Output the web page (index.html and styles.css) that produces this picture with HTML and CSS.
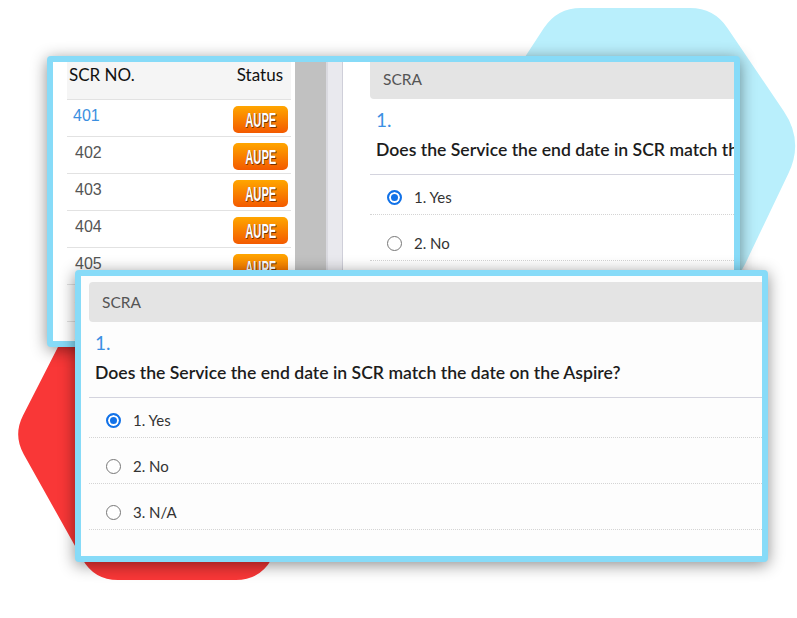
FILE: index.html
```html
<!DOCTYPE html>
<html lang="en">
<head>
<meta charset="utf-8">
<title>SCRA</title>
<link rel="stylesheet" href="styles.css">
</head>
<body>
<div class="stage">
  <svg class="bg" width="797" height="618" viewBox="0 0 797 618" aria-hidden="true">
    <path class="hex-blue" d="M581,8 L690,8 Q714,8 727.4,27.9 L783.8,111.2 Q804,141 788.4,173.5 L745.4,263.4 Q735,285 711,285 L564,285 Q540,285 529.5,263.4 L485.7,173.4 Q470,141 489.7,110.9 L543.9,28.1 Q557,8 581,8 Z"/>
    <path class="hex-red" d="M118,580 L236,580 Q260,580 271.6,559 L329.4,454.3 Q340,435 329.9,415.5 L276,311.3 Q265,290 241,290 L111,290 Q87,290 76.1,311.4 L23,415.4 Q13,435 23.7,454.2 L82.3,559 Q94,580 118,580 Z"/>
  </svg>

  <div class="card back">
    <div class="list">
      <div class="thead"><span>SCR NO.</span><span>Status</span></div>
      <div class="row"><span class="num link">401</span><span class="badge"><span>AUPE</span></span></div>
      <div class="row"><span class="num">402</span><span class="badge"><span>AUPE</span></span></div>
      <div class="row"><span class="num">403</span><span class="badge"><span>AUPE</span></span></div>
      <div class="row"><span class="num">404</span><span class="badge"><span>AUPE</span></span></div>
      <div class="row"><span class="num">405</span><span class="badge"><span>AUPE</span></span></div>
      <div class="row"><span class="num">406</span><span class="badge"><span>AUPE</span></span></div>
      <div class="row"><span class="num">407</span><span class="badge"><span>AUPE</span></span></div>
    </div>
    <div class="scroll"></div>
    <div class="split"></div>
    <div class="panel">
      <section class="scra">
        <div class="scra-head">SCRA</div>
        <div class="qnum">1.</div>
        <div class="qtext">Does the Service the end date in SCR match the date on the Aspire?</div>
        <div class="opts">
          <div class="opt"><span class="radio on"></span><span class="lbl">1. Yes</span></div>
          <div class="opt"><span class="radio"></span><span class="lbl">2. No</span></div>
          <div class="opt"><span class="radio"></span><span class="lbl">3. N/A</span></div>
        </div>
      </section>
    </div>
  </div>

  <div class="card front">
    <section class="scra">
      <div class="scra-head">SCRA</div>
      <div class="qnum">1.</div>
      <div class="qtext">Does the Service the end date in SCR match the date on the Aspire?</div>
      <div class="opts">
        <div class="opt"><span class="radio on"></span><span class="lbl">1. Yes</span></div>
        <div class="opt"><span class="radio"></span><span class="lbl">2. No</span></div>
        <div class="opt"><span class="radio"></span><span class="lbl">3. N/A</span></div>
      </div>
    </section>
  </div>
</div>
</body>
</html>
```

FILE: styles.css
```css
* { box-sizing: border-box; }

body {
  margin: 0;
  background: #ffffff;
}

.stage {
  position: relative;
  width: 797px;
  height: 618px;
  overflow: hidden;
  font-family: Lato, "Noto Sans", sans-serif;
}

.bg {
  position: absolute;
  left: 0;
  top: 0;
}

.hex-blue { fill: #b9effc; }
.hex-red { fill: #f93737; }

.card {
  position: absolute;
  border: 6px solid #87dbf8;
  border-radius: 4px;
  background: #ffffff;
  overflow: hidden;
  box-shadow: 0 3px 16px rgba(0, 0, 0, 0.45);
}

.back {
  left: 47px;
  top: 56px;
  width: 693px;
  height: 291px;
  display: flex;
  padding-left: 14px;
}

.front {
  left: 75px;
  top: 270px;
  width: 693px;
  height: 292px;
  padding: 6px 0 0 8px;
  background: #fdfdfd;
}

/* list */
.list {
  width: 224px;
  flex: none;
  margin-right: 4px;
}

.thead {
  display: flex;
  justify-content: space-between;
  height: 38px;
  padding: 1px 8px 0 2px;
  line-height: 24px;
  font-size: 17px;
  color: #111;
  background: #f5f5f5;
  border-bottom: 1px solid #e2e2e2;
}

.row {
  display: flex;
  justify-content: space-between;
  align-items: flex-start;
  height: 37px;
  padding: 6px 3px 0 8px;
  border-bottom: 1px solid #e2e2e2;
}

.num {
  font-family: "Liberation Sans", Arial, sans-serif;
  font-size: 16px;
  line-height: 20px;
  color: #555;
}

.num.link {
  color: #3b8fe0;
  margin-left: -2px;
}

.badge {
  width: 55px;
  height: 27px;
  border-radius: 5px;
  background: linear-gradient(#ffa600, #f35a00);
  display: flex;
  align-items: center;
  justify-content: center;
  overflow: hidden;
}

.badge span {
  display: inline-block;
  font-family: "Liberation Sans", Arial, sans-serif;
  font-weight: bold;
  font-size: 20px;
  line-height: 1;
  color: #fff;
  transform: scaleX(0.56);
  text-shadow: 1px 1px 0 #7a3000, -0.5px 0 0 #8a3a00;
}

.scroll {
  width: 31px;
  flex: none;
  background: #c1c1c1;
}

.split {
  width: 17px;
  flex: none;
  background: #e9e9ee;
  border-left: 2px solid #dadae0;
  border-right: 1px solid #cfcfd9;
}

.panel {
  flex: 1;
  min-width: 0;
  padding-left: 27px;
  overflow: hidden;
}

.panel .scra {
  margin-top: -3px;
}

/* question block */
.scra-head {
  height: 40px;
  line-height: 40px;
  padding-left: 13px;
  background: #e4e4e4;
  color: #555;
  font-size: 15.5px;
  border-radius: 4px 0 0 4px;
}

.qnum {
  margin-top: 9px;
  padding-left: 6px;
  font-size: 19px;
  line-height: 24px;
  color: #3b8fe3;
}

.qtext {
  margin-top: 6px;
  padding: 0 0 12px 6px;
  font-size: 17.6px;
  line-height: 24px;
  font-weight: 600;
  color: #1c1c1c;
  white-space: nowrap;
  border-bottom: 1px solid #d4d4de;
}

.opt {
  display: flex;
  align-items: center;
  gap: 12px;
  padding: 18px 0 7px 17px;
  border-bottom: 1px dotted #d4d4d4;
}

.opt:first-child {
  padding-top: 12px;
}

.radio {
  width: 15px;
  height: 15px;
  flex: none;
  border-radius: 50%;
  border: 1.5px solid #777;
  background: #fff;
}

.radio.on {
  border: 2px solid #1272e8;
  background: #1272e8;
  box-shadow: inset 0 0 0 2px #fff;
}

.lbl {
  font-size: 15px;
  line-height: 20px;
  color: #333;
}
```
